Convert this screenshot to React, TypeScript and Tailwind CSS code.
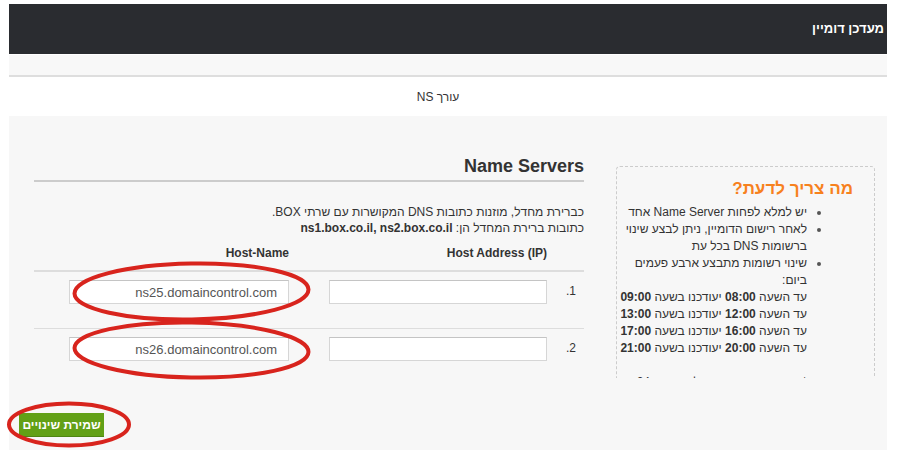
const FONT = "font-['Liberation_Sans',Arial,'DejaVu_Sans',sans-serif]";

const TIMES: Array<[string, string]> = [
  ["08:00", "09:00"],
  ["12:00", "13:00"],
  ["16:00", "17:00"],
  ["20:00", "21:00"],
];

const ROWS = ["ns25.domaincontrol.com", "ns26.domaincontrol.com"];

function ServerRow({ index, host }: { index: number; host: string }) {
  return (
    <div
      className={`flex pt-2 ${index === 0 ? "h-[57px] border-b border-[#dddddd]" : "h-[56px]"}`}
    >
      <div className="w-[37px] shrink-0 pr-2 pt-[3px] text-[12px] leading-4 text-[#333]">
        {index + 1}.
      </div>
      <input
        readOnly
        className="h-6 w-[218px] shrink-0 border border-[#d6d6d6] border-t-[#c4c4c4] bg-white px-2 text-[13px] text-[#555] outline-none"
        defaultValue=""
      />
      <div className="w-10 shrink-0" />
      <input
        readOnly
        className="h-6 w-[220px] shrink-0 border border-[#d6d6d6] border-t-[#c4c4c4] bg-white pr-[11px] pl-2 text-right text-[13px] text-[#555] outline-none"
        defaultValue={host}
      />
    </div>
  );
}

export default function App() {
  return (
    <div dir="rtl" className={`relative min-h-screen bg-white pt-1 pl-[9px] pr-[10px] ${FONT}`}>
      {/* Title bar */}
      <header className="flex h-[50px] items-center bg-[#2a2c30] pr-[3px]">
        <h1 className="text-[13px] font-bold text-white">מעדכן דומיין</h1>
      </header>
      <div className="mt-px h-[22px] border-b-2 border-[#dedede] bg-[#f8f8f8]" />

      <div className="flex h-[39px] items-center justify-center pr-5 text-[12px] text-[#333]">
        עורך NS
      </div>

      {/* Main panel */}
      <section className="bg-[#f7f7f7] pt-10 pr-3 pb-[13px] pl-[10px]">
        <div className="flex gap-8 pl-[14px]">
          {/* Sidebar */}
          <aside className="mt-[10px] h-[212px] w-[259px] shrink-0 overflow-hidden">
            <div className="h-[280px] rounded border border-dashed border-[#cccccc] pt-[10px]">
              <h3 className="pr-[21px] text-[17px] font-bold leading-6 text-[#f7811e]">
                מה צריך לדעת?
              </h3>
              <ul className="mt-[3px] list-disc pr-[67px] pl-1 text-[12px] leading-[17px] text-[#333] marker:text-[#555]">
                <li>יש למלא לפחות Name Server אחד</li>
                <li>לאחר רישום הדומיין, ניתן לבצע שינוי ברשומות DNS בכל עת</li>
                <li>
                  שינוי רשומות מתבצע ארבע פעמים ביום:
                  {TIMES.map(([from, to]) => (
                    <div key={from} className="whitespace-nowrap">
                      עד השעה <b>{from}</b> יעודכנו בשעה <b>{to}</b>
                    </div>
                  ))}
                  <div className="h-[17px]" />
                  <div className="whitespace-nowrap">* עדכון השינויים עשוי לקחת עד 24 שעות</div>
                </li>
              </ul>
            </div>
          </aside>

          {/* Name servers */}
          <div className="w-[550px] shrink-0">
            <h2 className="border-b-2 border-[#cccccc] pb-1 text-[18px] font-bold leading-5 text-[#333]">
              Name Servers
            </h2>
            <div className="mt-[22px] text-[12px] leading-4 text-[#333]">
              <p>כברירת מחדל, מוזנות כתובות DNS המקושרות עם שרתי BOX.</p>
              <p>
                כתובות ברירת המחדל הן: <b>ns1.box.co.il, ns2.box.co.il</b>
              </p>
            </div>
            <div className="flex h-[36px] items-center border-b-2 border-[#dddddd] text-[12px] font-bold text-[#333]">
              <div className="w-[37px] shrink-0" />
              <div className="w-[218px] shrink-0">Host Address (IP)</div>
              <div className="w-10 shrink-0" />
              <div className="w-[220px] shrink-0">Host-Name</div>
            </div>
            {ROWS.map((host, i) => (
              <ServerRow key={host} index={i} host={host} />
            ))}
          </div>
        </div>

        <div className="mt-7 flex justify-end">
          <button
            type="button"
            className="h-6 w-[85px] border-b border-[#4f8512] bg-[#62a016] text-[12px] font-bold text-white"
          >
            שמירת שינויים
          </button>
        </div>
      </section>

      {/* Red annotation marks */}
      <svg
        className="pointer-events-none absolute top-0 left-0"
        width="897"
        height="456"
        viewBox="0 0 897 456"
      >
        <g fill="none" stroke="#d8241d" strokeWidth="4">
          <ellipse cx="191.5" cy="291.5" rx="117" ry="28" transform="rotate(-1 191.5 291.5)" />
          <ellipse cx="191.5" cy="350" rx="117" ry="27.5" transform="rotate(1 191.5 350)" />
          <ellipse cx="69" cy="424.5" rx="60" ry="21" />
        </g>
      </svg>
    </div>
  );
}
